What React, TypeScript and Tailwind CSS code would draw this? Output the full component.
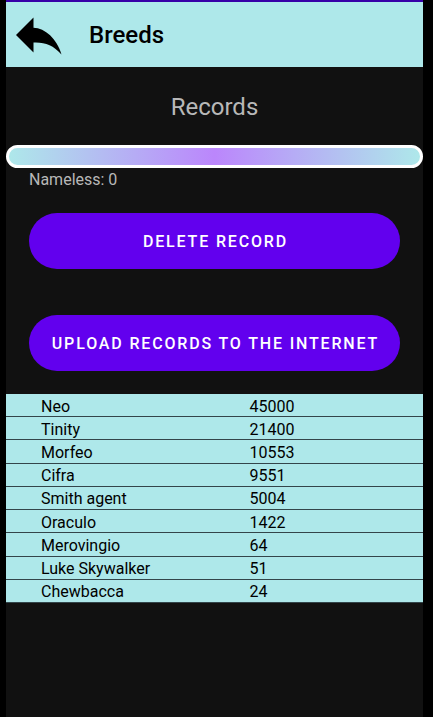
const records = [
  { name: "Neo", score: 45000 },
  { name: "Tinity", score: 21400 },
  { name: "Morfeo", score: 10553 },
  { name: "Cifra", score: 9551 },
  { name: "Smith agent", score: 5004 },
  { name: "Oraculo", score: 1422 },
  { name: "Merovingio", score: 64 },
  { name: "Luke Skywalker", score: 51 },
  { name: "Chewbacca", score: 24 },
];

function AppBar() {
  return (
    <header className="flex h-[67px] items-center border-t-2 border-[#3700a8] bg-[#aee8ea] pl-2 text-black">
      <button type="button" aria-label="Back" className="flex h-12 w-12 items-center">
        <svg viewBox="0 0 48 40" className="h-10 w-12" fill="currentColor" aria-hidden="true">
          <path d="M2 20 19.500 2.500V12.800C31 13 43 24 47.500 39.500 39 30 31 27 19.500 27.500V37.500Z" />
        </svg>
      </button>
      <h1 className="pl-[27px] text-2xl font-medium">Breeds</h1>
    </header>
  );
}

function ActionButton({ label }: { label: string }) {
  return (
    <button
      type="button"
      className="h-14 w-full rounded-full bg-[#6200ee] pt-0.5 pl-0.5 text-base font-medium tracking-[0.115em] whitespace-nowrap text-white uppercase"
    >
      {label}
    </button>
  );
}

function RecordsTable() {
  return (
    <table className="mt-[23px] h-[209px] w-full table-fixed border-collapse bg-[#aee8ea] text-base leading-[19px] text-black">
      <tbody>
        {records.map((record) => (
          <tr key={record.name} className="border-b border-[#33454a]">
            <td className="p-0 pt-0.5 pl-[35px]">{record.name}</td>
            <td className="p-0 pt-0.5 pl-[35px]">{record.score}</td>
          </tr>
        ))}
      </tbody>
    </table>
  );
}

export default function App() {
  return (
    <div className="min-h-screen bg-black pr-2.5 pl-1.5 font-['Roboto',sans-serif]">
      <div className="min-h-screen bg-[#111111] text-[#b8b8b8]">
        <AppBar />
        <main>
          <h2 className="pt-6 text-center text-2xl leading-8">Records</h2>
          <div className="mt-[22px] h-[23px] rounded-full border-3 border-white bg-linear-to-r/srgb from-[#aee8ea] via-[#bb86fc] to-[#aee8ea]" />
          <p className="px-[23px] text-base leading-6">Nameless: 0</p>
          <div className="mt-[21px] flex flex-col gap-[46px] px-[23px]">
            <ActionButton label="Delete record" />
            <ActionButton label="Upload records to the internet" />
          </div>
          <RecordsTable />
        </main>
      </div>
    </div>
  );
}
